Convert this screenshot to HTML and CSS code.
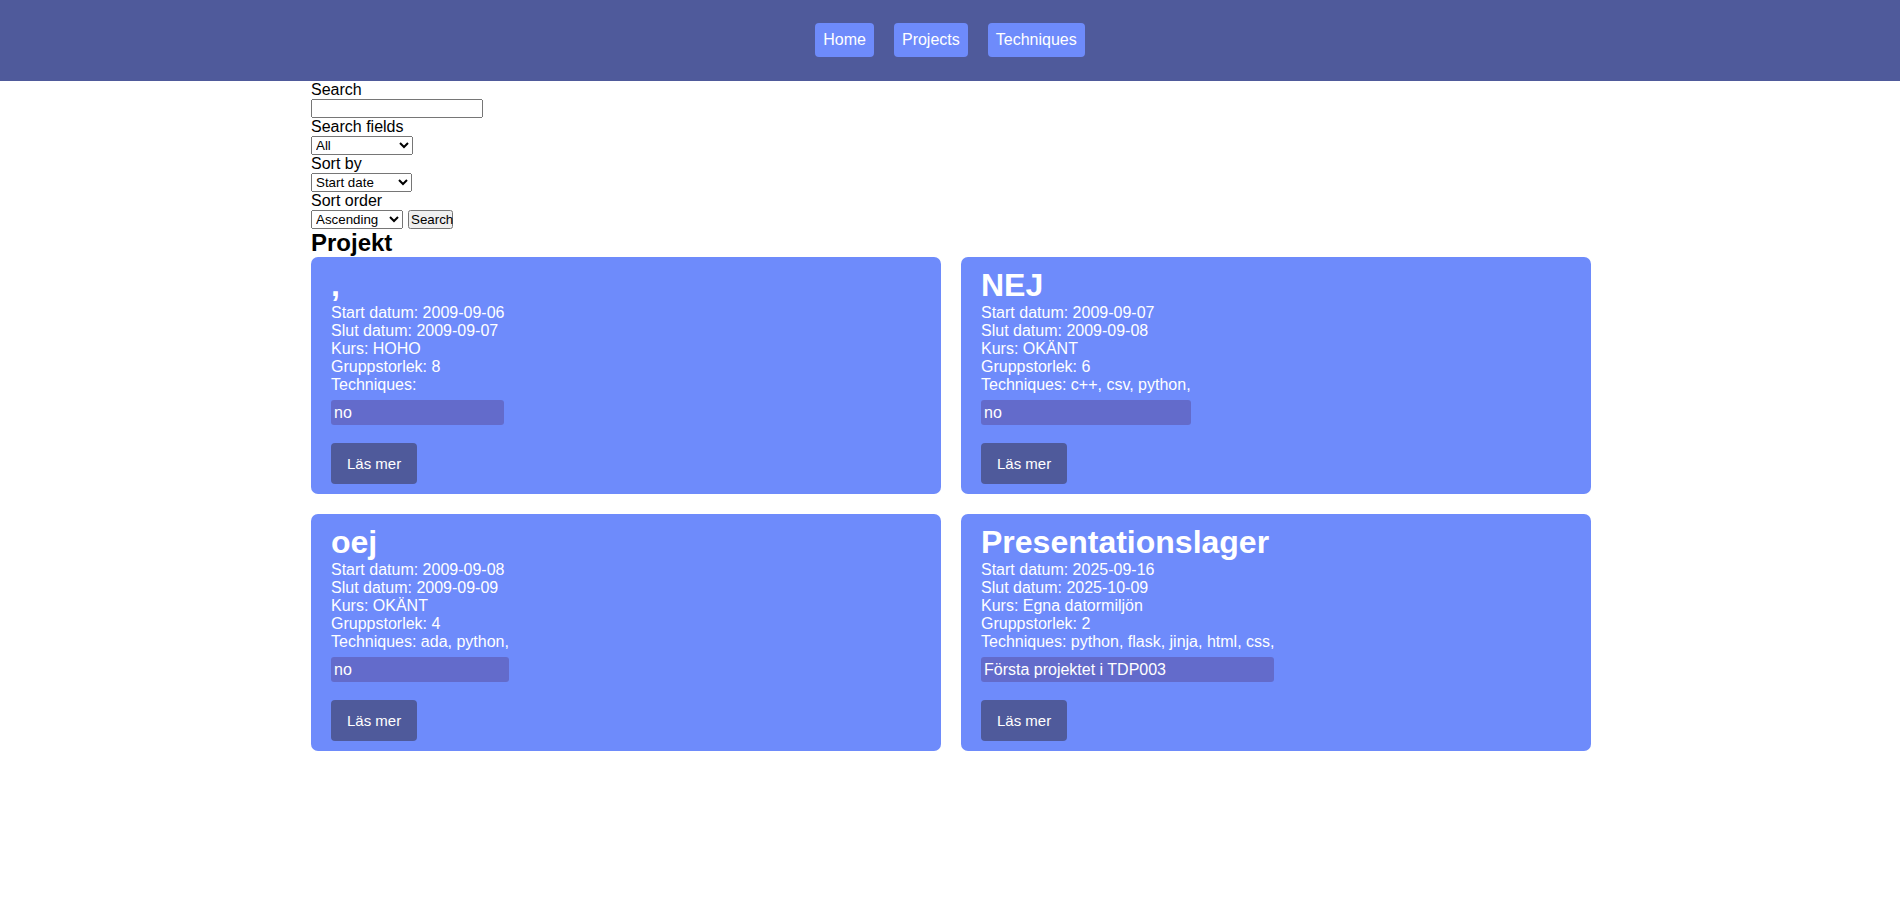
FILE: index.html
```html
<!DOCTYPE html>
<html lang="sv">
<head>
<meta charset="utf-8">
<title>Projekt</title>
<link rel="stylesheet" href="styles.css">
</head>
<body>
<header class="site-header">
  <nav class="site-nav">
    <a class="nav-link" href="#">Home</a>
    <a class="nav-link" href="#">Projects</a>
    <a class="nav-link" href="#">Techniques</a>
  </nav>
</header>
<main class="page">
  <form class="search-form">
    <label class="field-label" for="q">Search</label>
    <input class="search-input" id="q" type="text">
    <label class="field-label" for="fields">Search fields</label>
    <select class="select select-fields" id="fields"><option>All</option><option>Description</option></select>
    <label class="field-label" for="sortby">Sort by</label>
    <select class="select select-sort" id="sortby"><option>Start date</option><option>End date</option></select>
    <label class="field-label" for="order">Sort order</label>
    <div class="form-row">
      <select class="select select-order" id="order"><option>Ascending</option><option>Descending</option></select>
      <button class="search-button" type="submit">Search</button>
    </div>
  </form>
  <h2 class="section-title">Projekt</h2>
  <div class="project-grid">
    <article class="card">
      <div class="card-info">
        <h1 class="card-title">,</h1>
        <div class="card-line">Start datum: 2009-09-06</div>
        <div class="card-line">Slut datum: 2009-09-07</div>
        <div class="card-line">Kurs: HOHO</div>
        <div class="card-line">Gruppstorlek: 8</div>
        <div class="card-line">Techniques: </div>
        <div class="card-desc">no</div>
      </div>
      <a class="card-button" href="#">Läs mer</a>
    </article>
    <article class="card">
      <div class="card-info">
        <h1 class="card-title">NEJ</h1>
        <div class="card-line">Start datum: 2009-09-07</div>
        <div class="card-line">Slut datum: 2009-09-08</div>
        <div class="card-line">Kurs: OKÄNT</div>
        <div class="card-line">Gruppstorlek: 6</div>
        <div class="card-line">Techniques: c++, csv, python,</div>
        <div class="card-desc">no</div>
      </div>
      <a class="card-button" href="#">Läs mer</a>
    </article>
    <article class="card">
      <div class="card-info">
        <h1 class="card-title">oej</h1>
        <div class="card-line">Start datum: 2009-09-08</div>
        <div class="card-line">Slut datum: 2009-09-09</div>
        <div class="card-line">Kurs: OKÄNT</div>
        <div class="card-line">Gruppstorlek: 4</div>
        <div class="card-line">Techniques: ada, python,</div>
        <div class="card-desc">no</div>
      </div>
      <a class="card-button" href="#">Läs mer</a>
    </article>
    <article class="card">
      <div class="card-info">
        <h1 class="card-title">Presentationslager</h1>
        <div class="card-line">Start datum: 2025-09-16</div>
        <div class="card-line">Slut datum: 2025-10-09</div>
        <div class="card-line">Kurs: Egna datormiljön</div>
        <div class="card-line">Gruppstorlek: 2</div>
        <div class="card-line">Techniques: python, flask, jinja, html, css,</div>
        <div class="card-desc">Första projektet i TDP003</div>
      </div>
      <a class="card-button" href="#">Läs mer</a>
    </article>
  </div>
</main>
</body>
</html>
```
FILE: styles.css
```css
html, body {
  margin: 0;
  padding: 0;
  background: #ffffff;
}

body {
  font-family: "Liberation Sans", Arial, sans-serif;
  font-size: 16px;
  line-height: 18px;
  color: #000000;
}

.site-header {
  background: #4f5a9b;
  padding: 23px 0 24px;
}

.site-nav {
  display: flex;
  justify-content: center;
  gap: 20px;
}

.nav-link {
  display: block;
  background: #6e8bfb;
  color: #ffffff;
  text-decoration: none;
  padding: 8px;
  line-height: 18px;
  border-radius: 4px;
}

.page {
  width: 1280px;
  margin-left: calc(50% - 639px);
}

.search-form {
  margin: 0;
}

.field-label {
  display: block;
  line-height: 18px;
}

.search-input,
.select,
.search-button {
  display: block;
  box-sizing: border-box;
  height: 19px;
  margin: 0;
  font-family: "Liberation Sans", Arial, sans-serif;
  font-size: 13.33px;
}

.search-input {
  width: 172px;
}

.select-fields {
  width: 102px;
}

.select-sort {
  width: 101px;
}

.select-order {
  width: 92px;
}

.form-row {
  display: flex;
  align-items: flex-start;
  gap: 5px;
}

.search-button {
  width: 45px;
  padding: 0 1px;
}

.section-title {
  margin: 0;
  font-size: 24px;
  line-height: 28px;
  font-weight: bold;
}

.project-grid {
  display: grid;
  grid-template-columns: 1fr 1fr;
  gap: 20px;
}

.card {
  background: #6e8bfb;
  color: #ffffff;
  border-radius: 7px;
  padding: 10px 20px;
}

.card-info {
  width: fit-content;
}

.card-title {
  margin: 0;
  font-size: 32px;
  line-height: 37px;
  font-weight: bold;
}

.card-line {
  line-height: 18px;
  white-space: pre;
}

.card-desc {
  background: #636bcb;
  margin-top: 6px;
  padding: 3px;
  line-height: 19px;
  border-radius: 3px;
}

.card-button {
  display: inline-block;
  margin-top: 18px;
  padding: 12px 16px;
  background: #4f5a9b;
  color: #ffffff;
  text-decoration: none;
  font-size: 15px;
  line-height: 17px;
  border-radius: 4px;
}
```
